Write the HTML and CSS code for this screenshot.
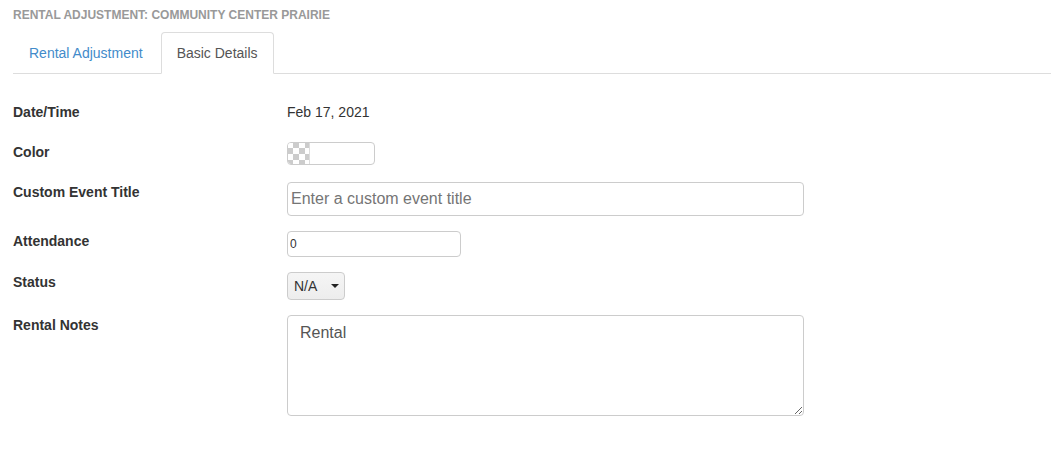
FILE: index.html
```html
<!DOCTYPE html>
<html>
<head>
<meta charset="utf-8">
<link rel="stylesheet" href="styles.css">
</head>
<body>
<div class="page">
  <div class="title">Rental Adjustment: Community Center Prairie</div>
  <ul class="tabs">
    <li class="tab"><a href="#">Rental Adjustment</a></li>
    <li class="tab active"><a href="#">Basic Details</a></li>
  </ul>
  <form class="form">
    <div class="row">
      <label class="label">Date/Time</label>
      <div class="value">Feb 17, 2021</div>
    </div>
    <div class="row">
      <label class="label">Color</label>
      <div class="color-input"><span class="swatch"></span></div>
    </div>
    <div class="row">
      <label class="label">Custom Event Title</label>
      <input class="text-input wide" type="text" placeholder="Enter a custom event title">
    </div>
    <div class="row">
      <label class="label">Attendance</label>
      <input class="text-input small" type="text" value="0">
    </div>
    <div class="row">
      <label class="label">Status</label>
      <div class="select-wrap">
        <select class="select"><option>N/A</option></select>
      </div>
    </div>
    <div class="row">
      <label class="label">Rental Notes</label>
      <textarea class="notes">Rental</textarea>
    </div>
  </form>
</div>
</body>
</html>
```

FILE: styles.css
```css
* { box-sizing: border-box; }

body {
  margin: 0;
  font-family: "Liberation Sans", Arial, sans-serif;
  font-size: 14px;
  color: #333;
  background: #fff;
}

.page {
  padding: 7px 0 0 13px;
}

.title {
  font-size: 12px;
  font-weight: bold;
  text-transform: uppercase;
  color: #999;
  line-height: 17px;
}

.tabs {
  list-style: none;
  margin: 8px 0 0 0;
  padding: 0;
  display: flex;
  border-bottom: 1px solid #ddd;
}

.tab {
  margin-right: 2px;
  margin-bottom: -1px;
}

.tab a {
  display: block;
  padding: 10px 15px;
  line-height: 20px;
  border: 1px solid transparent;
  border-radius: 4px 4px 0 0;
  color: #428bca;
  text-decoration: none;
}

.tab.active a {
  color: #555;
  background: #fff;
  border-color: #ddd #ddd transparent;
}

.form {
  margin-top: 28px;
}

.row {
  display: flex;
  align-items: flex-start;
  min-height: 25px;
  margin-bottom: 15px;
}

.label {
  width: 274px;
  flex: none;
  font-weight: bold;
  line-height: 20px;
  color: #333;
}

.value {
  line-height: 20px;
  color: #333;
}

.color-input {
  width: 88px;
  height: 23px;
  border: 1px solid #ccc;
  border-radius: 4px;
  overflow: hidden;
  display: flex;
}

.swatch {
  width: 23px;
  margin: -1px 0 0 -1px;
  height: 23px;
  background-color: #fff;
  background-image:
    linear-gradient(45deg, #ccc 25%, transparent 25%, transparent 75%, #ccc 75%),
    linear-gradient(45deg, #ccc 25%, transparent 25%, transparent 75%, #ccc 75%);
  background-size: 12px 12px;
  background-position: 0 0, 6px 6px;
  border-right: 1px solid #ddd;
}

.text-input {
  border: 1px solid #ccc;
  border-radius: 4px;
  font-family: "Liberation Sans", Arial, sans-serif;
  color: #333;
  padding: 0 2px;
  outline: none;
}

.text-input.wide {
  width: 517px;
  height: 34px;
  font-size: 16px;
  padding: 0 3px;
}

.text-input.wide::placeholder {
  color: #757575;
}

.text-input.small {
  width: 174px;
  height: 26px;
  font-size: 12px;
}

.select-wrap {
  position: relative;
  width: 58px;
  height: 28px;
}

.select {
  appearance: none;
  -webkit-appearance: none;
  width: 58px;
  height: 28px;
  border: 1px solid #ccc;
  border-radius: 4px;
  background: linear-gradient(#f5f5f5, #ededed);
  font-family: "Liberation Sans", Arial, sans-serif;
  font-size: 14px;
  color: #333;
  padding: 0 0 0 6px;
  outline: none;
}

.select-wrap::after {
  content: "";
  position: absolute;
  right: 6px;
  top: 12px;
  border-left: 4px solid transparent;
  border-right: 4px solid transparent;
  border-top: 4px solid #222;
  pointer-events: none;
}

.notes {
  width: 517px;
  height: 101px;
  border: 1px solid #ccc;
  border-radius: 4px;
  padding: 7px 12px;
  font-family: "Liberation Sans", Arial, sans-serif;
  font-size: 16px;
  line-height: 20px;
  color: #555;
  outline: none;
  resize: vertical;
}
```
